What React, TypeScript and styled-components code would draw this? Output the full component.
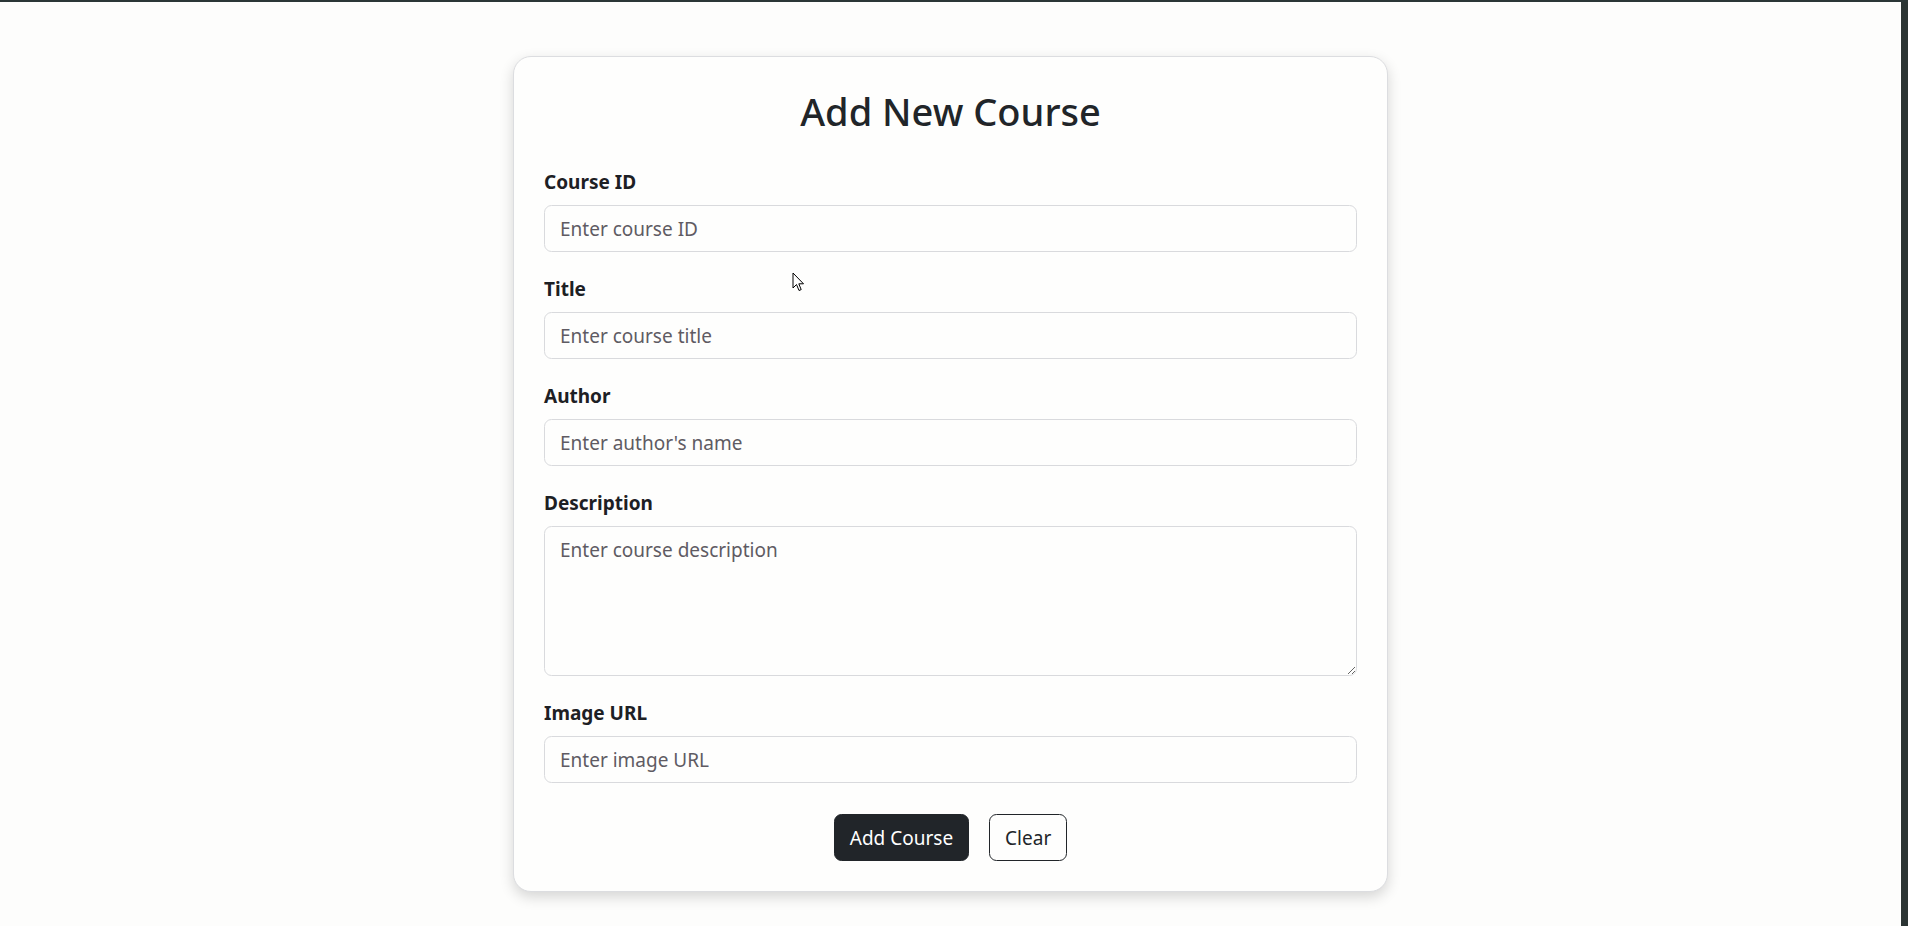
import React from "react";
import styled, { createGlobalStyle } from "styled-components";

const GlobalStyle = createGlobalStyle`
  html, body {
    margin: 0;
    padding: 0;
    background: #fdfdfc;
  }
  body {
    font-family: "Noto Sans", "Open Sans", "Liberation Sans", sans-serif;
    color: #212529;
  }
  * {
    box-sizing: border-box;
  }
`;

const Screen = styled.div`
  display: flex;
  flex-direction: column;
  height: 926px;
  overflow: hidden;
`;

const TopLine = styled.div`
  height: 2px;
  background: #2b3636;
  flex-shrink: 0;
`;

const Body = styled.div`
  display: flex;
  flex: 1;
  min-height: 0;
`;

const Viewport = styled.main`
  flex: 1;
  position: relative;
  padding-top: 54px;
  display: flex;
  justify-content: center;
  align-items: flex-start;
`;

const Scrollbar = styled.div`
  width: 7px;
  background: #2b3433;
  flex-shrink: 0;
`;

const Card = styled.form`
  width: 875px;
  padding: 30px;
  background: #fefefd;
  border: 1px solid #dcdde0;
  border-radius: 18px;
  box-shadow: 0 5px 14px rgba(0, 0, 0, 0.16);
`;

const Heading = styled.h2`
  margin: 0 0 30px;
  font-size: 38px;
  line-height: 48px;
  font-weight: 500;
  text-align: center;
  color: #212529;
`;

const Group = styled.div`
  margin-bottom: 20px;
`;

const Label = styled.label`
  display: block;
  padding-top: 2px;
  margin-bottom: 8px;
  font-size: 19px;
  line-height: 30px;
  font-weight: 700;
  color: #1d2024;
`;

const fieldStyles = `
  display: block;
  width: 100%;
  padding: 7.5px 15px;
  font-family: "Noto Sans", "Open Sans", "Liberation Sans", sans-serif;
  font-size: 19px;
  line-height: 30px;
  color: #212529;
  background: #fefefd;
  border: 1px solid #d9dadd;
  border-radius: 7.5px;
  outline: none;

  &::placeholder {
    color: #5f5b63;
  }
`;

const Input = styled.input`
  ${fieldStyles}
  height: 47px;
`;

const TextArea = styled.textarea`
  ${fieldStyles}
  height: 150px;
  resize: vertical;
`;

const Actions = styled.div`
  display: flex;
  justify-content: center;
  gap: 20px;
  margin-top: 31px;
`;

const Button = styled.button<{ $variant: "dark" | "outline" }>`
  padding: 7.5px 15px;
  height: 47px;
  font-family: "Noto Sans", "Open Sans", "Liberation Sans", sans-serif;
  font-size: 19px;
  line-height: 30px;
  border-radius: 7.5px;
  border: 1px solid #212529;
  cursor: pointer;
  background: ${(p) => (p.$variant === "dark" ? "#212529" : "transparent")};
  color: ${(p) => (p.$variant === "dark" ? "#ffffff" : "#212529")};
`;

const Pointer = styled.svg`
  position: absolute;
  left: 792px;
  top: 270px;
  pointer-events: none;
`;

export default function App() {
  return (
    <>
      <GlobalStyle />
      <Screen>
        <TopLine />
        <Body>
          <Viewport>
            <Card onSubmit={(e) => e.preventDefault()}>
              <Heading>Add New Course</Heading>

              <Group>
                <Label htmlFor="courseId">Course ID</Label>
                <Input id="courseId" placeholder="Enter course ID" />
              </Group>

              <Group>
                <Label htmlFor="title">Title</Label>
                <Input id="title" placeholder="Enter course title" />
              </Group>

              <Group>
                <Label htmlFor="author">Author</Label>
                <Input id="author" placeholder="Enter author's name" />
              </Group>

              <Group>
                <Label htmlFor="description">Description</Label>
                <TextArea id="description" placeholder="Enter course description" />
              </Group>

              <Group>
                <Label htmlFor="imageUrl">Image URL</Label>
                <Input id="imageUrl" placeholder="Enter image URL" />
              </Group>

              <Actions>
                <Button type="submit" $variant="dark">Add Course</Button>
                <Button type="reset" $variant="outline">Clear</Button>
              </Actions>
            </Card>

            <Pointer width="13" height="21" viewBox="0 0 13 21">
              <path
                d="M1 1 L1 16 L4.5 12.5 L7 18.5 L9.2 17.6 L6.8 11.8 L11.5 11.8 Z"
                fill="#ffffff"
                stroke="#000000"
                strokeWidth="1"
                strokeLinejoin="round"
              />
            </Pointer>
          </Viewport>
          <Scrollbar />
        </Body>
      </Screen>
    </>
  );
}
